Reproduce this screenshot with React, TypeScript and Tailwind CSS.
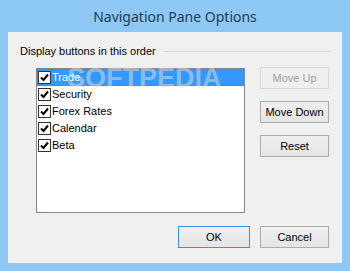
import React from 'react';

const items = ['Trade', 'Security', 'Forex Rates', 'Calendar', 'Beta'];

function Check() {
  return (
    <span className="flex h-[13px] w-[13px] shrink-0 items-center justify-center border border-[#333] bg-white">
      <svg width="9" height="9" viewBox="0 0 9 9">
        <path d="M1 4.5 L3.5 7 L8 1.5" stroke="#000" strokeWidth="2" fill="none" />
      </svg>
    </span>
  );
}

function Btn({ label, disabled, primary, className = '' }: { label: string; disabled?: boolean; primary?: boolean; className?: string }) {
  return (
    <button
      className={`flex h-[22px] items-center justify-center border text-[11px] ${
        disabled
          ? 'border-[#d9d9d9] bg-[#efefef] text-[#a0a0a0]'
          : primary
            ? 'border-[#3c8ee6] bg-gradient-to-b from-[#f0f0f0] to-[#e5e5e5] text-black'
            : 'border-[#acacac] bg-gradient-to-b from-[#f0f0f0] to-[#e5e5e5] text-black'
      } ${className}`}
    >
      {label}
    </button>
  );
}

export default function App() {
  return (
    <div className="relative flex h-[271px] w-[350px] flex-col bg-[#8ec8f5] px-2 pb-2 font-['Liberation_Sans',sans-serif]">
      {/* Title bar */}
      <div className="flex h-8 items-center justify-center font-['Noto_Sans',sans-serif] text-[14px] text-[#263a52]">
        Navigation Pane Options
      </div>

      {/* Client area */}
      <div className="flex flex-1 flex-col bg-[#f0f0f0] px-3 pt-[13px]">
        <div className="flex items-center gap-2 text-[11px] text-black">
          <span className="leading-[13px]">Display buttons in this order</span>
          <div className="h-px flex-1 bg-[#d5d5d5]" />
        </div>

        <div className="mt-[10px] flex">
          <div className="ml-4 h-[145px] w-[209px] overflow-hidden border border-[#828790] bg-white">
            {items.map((item, i) => (
              <div
                key={item}
                className={`flex h-[17px] items-center gap-px text-[11px] ${
                  i === 0 ? 'border border-dotted border-[#cc6600] bg-[#3399ff] text-white' : 'border border-transparent text-black'
                }`}
              >
                <Check />
                <span>{item}</span>
              </div>
            ))}
          </div>

          <div className="-mt-px ml-[15px] flex flex-col gap-3">
            <Btn label="Move Up" disabled className="w-[69px]" />
            <Btn label="Move Down" className="w-[69px]" />
            <Btn label="Reset" className="w-[69px]" />
          </div>
        </div>

        <div className="mt-[13px] flex justify-end gap-[10px] pr-px">
          <Btn label="OK" primary className="w-[72px]" />
          <Btn label="Cancel" className="w-[69px]" />
        </div>
      </div>

      {/* watermark over the dialog */}
      <span className="pointer-events-none absolute left-[67px] top-[65px] text-[27px] font-bold leading-none text-white/45 [text-shadow:0_0_1px_rgba(0,0,0,0.12)]">
        SOFTPEDIA
      </span>
    </div>
  );
}
